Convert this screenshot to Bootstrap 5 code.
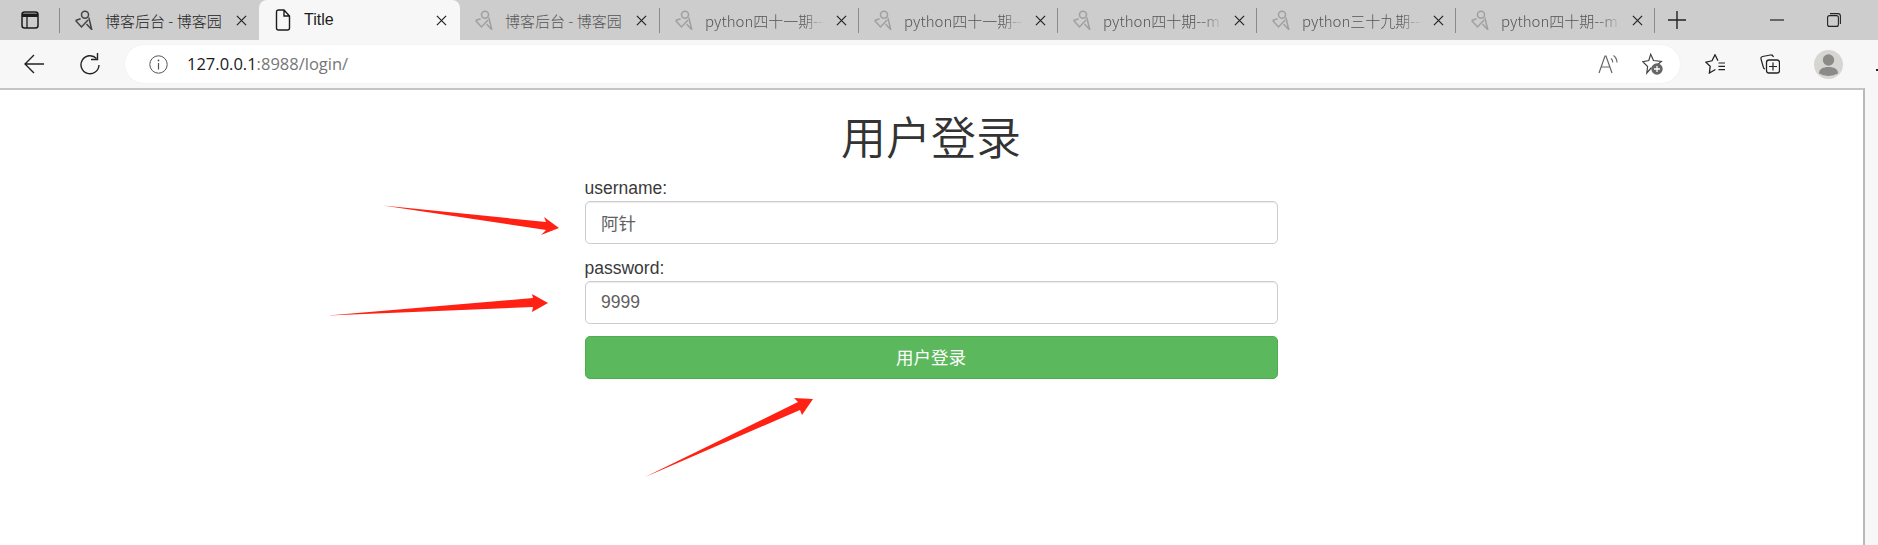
<!DOCTYPE html>
<html lang="zh">
<head>
<meta charset="utf-8">
<title>用户登录</title>
<link href="https://cdn.jsdelivr.net/npm/bootstrap@5.3.0/dist/css/bootstrap.min.css" rel="stylesheet">
<style>
html,body{height:545px;overflow:hidden;background:#f7f7f7;}
body{font-family:"Liberation Sans","Noto Sans CJK SC",sans-serif;color:#333;position:relative;}
svg{display:block;flex:none;}
.tabstrip{height:40px;background:#cdcdcd;}
.strip-lead{width:60px;padding-left:21px;height:40px;}
.tab-item{width:199px;flex:none;height:40px;padding:0 9px 0 15px;position:relative;font:300 15px "Noto Sans CJK SC","Noto Sans",sans-serif;color:#555;}
.tab-item::before{content:"";position:absolute;left:-1px;top:8px;height:25px;width:1px;background:#8b8b8b;}
.tab-item.no-sep::before{display:none;}
.tab-item.first{color:#1c1c1c;}
.tab-item.active-tab{width:201px;background:#f7f7f7;border-radius:8px 8px 0 0;color:#1c1c1c;font-family:"Liberation Sans",sans-serif;font-size:16px;font-weight:400;padding:0 10px 0 15px;}
.tab-item.third{width:200px;padding-right:10px;}
.tab-ico{width:18px;margin-right:12px;}
.tab-title{flex:1 1 0;min-width:0;white-space:nowrap;overflow:hidden;}
.tab-title.fade-end{-webkit-mask-image:linear-gradient(90deg,#000 78%,transparent 95%);mask-image:linear-gradient(90deg,#000 78%,transparent 95%);}
.tab-x{width:18px;display:flex;justify-content:center;}
.plus-wrap{width:44px;position:relative;height:40px;}
.plus-wrap::before{content:"";position:absolute;left:-1px;top:8px;height:25px;width:1px;background:#8b8b8b;}
.win-ctl{position:relative;height:40px;padding-right:37px;gap:43px;}
.toolbar{height:48px;background:#f7f7f7;padding:5px 0;}
.nav-ico{width:125px;padding-left:24px;gap:34px;}
.addr{width:1555px;height:38px;background:#fff;border-radius:19px;padding:0 16px 0 24px;box-shadow:0 0 2px rgba(0,0,0,.06);}
.addr-url{font-size:16.5px;font-family:"Open Sans","Liberation Sans",sans-serif;color:#767676;margin-left:19px;}
.addr-url b{font-weight:400;color:#1a1a1a;}
.tool-right{padding-left:25px;gap:35px;position:relative;flex:1;}
.viewport{width:1865px;height:457px;background:#fff;border-top:2px solid #c4c4c4;border-right:2px solid #b9b9b9;padding-right:1px;}
.login-box{width:693px;margin:0 auto;}
.login-title{font:350 45px/60px "Noto Sans CJK SC",sans-serif;color:#333;text-align:center;margin:16px 0 10px;}
.login-label{font-size:17.5px;line-height:25px;color:#3a3a3a;display:block;}
.login-input.form-control{height:43px;font-size:17.5px;color:#606060;padding:0 15.5px;border:1.25px solid #ccc;border-radius:5px;box-shadow:inset 0 1px 1px rgba(0,0,0,.075);font-family:"Liberation Sans","Noto Sans CJK SC",sans-serif;font-weight:400;}
.group-gap{margin-bottom:12px;}
.login-btn.btn{display:block;width:100%;height:43px;margin-top:12px;background:#5cb85c;border:1.25px solid #4cae4c;border-radius:5px;color:#fff;font-size:17.5px;font-weight:400;padding:0;font-family:"Noto Sans CJK SC",sans-serif;}
.arrow-layer{position:absolute;left:0;top:0;pointer-events:none;}
</style>
</head>
<body>
<svg width="0" height="0" style="position:absolute">
  <defs>
    <symbol id="fav" viewBox="0 0 18 20"><circle cx="10" cy="4.800" r="3.500" fill="none" stroke="currentColor" stroke-width="1.500"/><path d="M.6 10.500l5.900 6.500 6.500-7M.6 10.500l5-1.800M13.800 7.500l2.900 12-5.200-5.500" fill="none" stroke="currentColor" stroke-width="1.500"/></symbol>
    <symbol id="cls" viewBox="0 0 12 12"><path d="M1 1l10 10M11 1L1 11" stroke="currentColor" stroke-width="1.300" fill="none"/></symbol>
  </defs>
</svg>

<div class="tabstrip d-flex align-items-center">
  <div class="strip-lead d-flex align-items-center">
    <svg width="18" height="18" viewBox="0 0 18 18"><rect x="1" y="1" width="16" height="16" rx="2.500" fill="none" stroke="#1c1c1c" stroke-width="1.500"/><path d="M1 2.500h16v3.500H1z" fill="#1c1c1c"/><path d="M6 6v11" stroke="#1c1c1c" stroke-width="1.300"/></svg>
  </div>
  <div class="tab-item first d-flex align-items-center">
    <svg class="tab-ico" height="20" style="color:#444"><use href="#fav"/></svg>
    <span class="tab-title">博客后台 - 博客园</span>
    <span class="tab-x"><svg width="11" height="11" style="color:#222"><use href="#cls"/></svg></span>
  </div>
  <div class="tab-item active-tab no-sep d-flex align-items-center">
    <svg class="tab-ico" height="22" viewBox="0 0 18 22"><path d="M2.500 3a2 2 0 0 1 2-2h5.500l5.500 6v12a2 2 0 0 1-2 2h-9a2 2 0 0 1-2-2zM10 1v6h5.500" fill="none" stroke="#1c1c1c" stroke-width="1.400"/></svg>
    <span class="tab-title">Title</span>
    <span class="tab-x"><svg width="11" height="11" style="color:#222"><use href="#cls"/></svg></span>
  </div>
  <div class="tab-item third no-sep d-flex align-items-center">
    <svg class="tab-ico" height="20" style="color:#a0a0a0"><use href="#fav"/></svg>
    <span class="tab-title">博客后台 - 博客园</span>
    <span class="tab-x"><svg width="11" height="11" style="color:#222"><use href="#cls"/></svg></span>
  </div>
  <div class="tab-item d-flex align-items-center">
    <svg class="tab-ico" height="20" style="color:#a0a0a0"><use href="#fav"/></svg>
    <span class="tab-title fade-end">python四十一期--</span>
    <span class="tab-x"><svg width="11" height="11" style="color:#222"><use href="#cls"/></svg></span>
  </div>
  <div class="tab-item d-flex align-items-center">
    <svg class="tab-ico" height="20" style="color:#a0a0a0"><use href="#fav"/></svg>
    <span class="tab-title fade-end">python四十一期--</span>
    <span class="tab-x"><svg width="11" height="11" style="color:#222"><use href="#cls"/></svg></span>
  </div>
  <div class="tab-item d-flex align-items-center">
    <svg class="tab-ico" height="20" style="color:#a0a0a0"><use href="#fav"/></svg>
    <span class="tab-title fade-end">python四十期--m</span>
    <span class="tab-x"><svg width="11" height="11" style="color:#222"><use href="#cls"/></svg></span>
  </div>
  <div class="tab-item d-flex align-items-center">
    <svg class="tab-ico" height="20" style="color:#a0a0a0"><use href="#fav"/></svg>
    <span class="tab-title fade-end">python三十九期--</span>
    <span class="tab-x"><svg width="11" height="11" style="color:#222"><use href="#cls"/></svg></span>
  </div>
  <div class="tab-item d-flex align-items-center">
    <svg class="tab-ico" height="20" style="color:#a0a0a0"><use href="#fav"/></svg>
    <span class="tab-title fade-end">python四十期--m</span>
    <span class="tab-x"><svg width="11" height="11" style="color:#222"><use href="#cls"/></svg></span>
  </div>
  <div class="plus-wrap d-flex align-items-center justify-content-center">
    <svg width="18" height="18" viewBox="0 0 18 18"><path d="M0 9h18M9 0v18" stroke="#222" stroke-width="1.400" fill="none"/></svg>
  </div>
  <div class="win-ctl ms-auto d-flex align-items-center">
    <svg width="14" height="2" viewBox="0 0 14 2"><path d="M0 1h14" stroke="#222" stroke-width="1.200"/></svg>
    <svg width="14" height="14" viewBox="0 0 14 14"><rect x=".6" y="2.600" width="10.800" height="10.800" rx="2" fill="none" stroke="#222" stroke-width="1.100"/><path d="M3 .6h8a2.400 2.400 0 0 1 2.400 2.400v8" fill="none" stroke="#222" stroke-width="1.100"/></svg>
  </div>
</div>

<div class="toolbar d-flex align-items-center">
  <div class="nav-ico d-flex align-items-center">
    <svg width="21" height="20" viewBox="0 0 21 20"><path d="M20 10H2M10 1l-9 9 9 9" fill="none" stroke="#222" stroke-width="1.400"/></svg>
    <svg width="21" height="22" viewBox="0 0 21 22"><path d="M17.500 5.500a9 9 0 1 0 2.500 6.500" fill="none" stroke="#222" stroke-width="1.400"/><path d="M18.500 0v6.500h-6.500" fill="none" stroke="#222" stroke-width="1.400"/></svg>
  </div>
  <div class="addr d-flex align-items-center">
    <svg width="19" height="19" viewBox="0 0 19 19"><circle cx="9.500" cy="9.500" r="8.700" fill="none" stroke="#555" stroke-width="1"/><path d="M9.500 8v6.500" stroke="#555" stroke-width="1.200"/><circle cx="9.500" cy="5.500" r=".9" fill="#555"/></svg>
    <span class="addr-url"><b>127.0.0.1</b>:8988/login/</span>
    <div class="ms-auto d-flex align-items-center" style="gap:24px">
      <svg width="20" height="20" viewBox="0 0 20 20"><path d="M1 19L7 2h1l6 17M3 13h9" fill="none" stroke="#666" stroke-width="1.200"/><path d="M13 4.500a5 5 0 0 1 1.800 4M15.500 1.500a9 9 0 0 1 3.500 7" fill="none" stroke="#666" stroke-width="1.100"/></svg>
      <svg width="22" height="22" viewBox="0 0 22 22"><path d="M9.500 14.500l-4.700 5.500.8-6.500L.8 8.700l6-1.200L8.700 1.300l2.800 6.200 7.800 1-3.300 2.700" fill="none" stroke="#444" stroke-width="1.200"/><circle cx="15" cy="16" r="5.700" fill="#666"/><path d="M15 13v6M12 16h6" stroke="#fff" stroke-width="1.300"/></svg>
    </div>
  </div>
  <div class="tool-right d-flex align-items-center">
    <svg width="20" height="20" viewBox="0 0 20 20"><path d="M13 6.800L10 .8 7 6.800.8 8.200l4.400 4-.8 6.800 6-3.500" fill="none" stroke="#222" stroke-width="1.300"/><path d="M13.500 9h6.500M13.500 12.300h6.500M13.500 15.600h6.500" stroke="#222" stroke-width="1.200"/></svg>
    <svg width="20" height="20" viewBox="0 0 20 20"><path d="M5 15a2 2 0 0 1-1.500-1.300L1 5a2 2 0 0 1 1.500-2.500l8-1.500c1.500-.2 2.500.7 3 2" fill="none" stroke="#222" stroke-width="1.200"/><rect x="6.500" y="6" width="13" height="13" rx="2.500" fill="none" stroke="#222" stroke-width="1.300"/><path d="M13 8.500v8M9 12.500h8" stroke="#222" stroke-width="1.200"/></svg>
    <svg width="29" height="29" viewBox="0 0 29 29" style="margin-left:-1px"><circle cx="14.500" cy="14.500" r="14.500" fill="#d6d5d2"/><circle cx="14.500" cy="10" r="5.700" fill="#8c8a87"/><path d="M5 23.500c0-4.500 4-6.500 9.500-6.500s9.500 2 9.500 6.500a14 9 0 0 1-19 0z" fill="#8c8a87"/></svg>
    <span class="position-absolute" style="right:0;top:19px;width:2px;height:2px;background:#222"></span>
  </div>
</div>

<main class="viewport">
  <div class="login-box">
    <h1 class="login-title">用户登录</h1>
    <form>
      <div class="group-gap">
        <label class="login-label" for="u">username:</label>
        <input id="u" class="form-control login-input" type="text" value="阿针">
      </div>
      <div>
        <label class="login-label" for="p">password:</label>
        <input id="p" class="form-control login-input" type="text" value="9999">
      </div>
      <button type="button" class="btn login-btn">用户登录</button>
    </form>
  </div>
</main>

<svg class="arrow-layer" width="1878" height="545" viewBox="0 0 1878 545">
  <g fill="#ff2114">
    <polygon points="383,205.500 546,222 544,217 559,228 541,235 546,230"/>
    <polygon points="328,315.500 533,298 532,294 548,303 532,312 533,307"/>
    <polygon points="644,477.500 798,402 794,398 813,399 802,415 800,410"/>
  </g>
</svg>
</body>
</html>
